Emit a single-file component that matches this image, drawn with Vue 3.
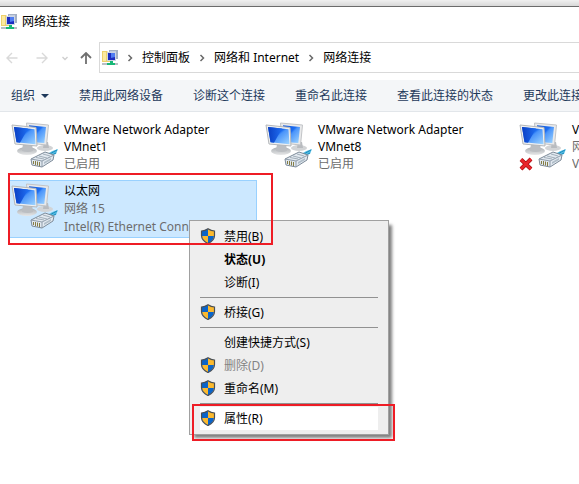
<script setup>
const commands = ['禁用此网络设备', '诊断这个连接', '重命名此连接', '查看此连接的状态', '更改此连接的设置']
const crumbs = ['控制面板', '网络和 Internet', '网络连接']
const adapters = [
  { title: 'VMware Network Adapter VMnet1', lines: ['已启用'] },
  { title: 'VMware Network Adapter VMnet8', lines: ['已启用'] },
  { title: 'VMware', lines: ['网络', 'VMware Virtual'], off: true },
  { title: '以太网', lines: ['网络 15', 'Intel(R) Ethernet Connection'], selected: true },
]
const menu = [
  { label: '禁用(B)', shield: true },
  { label: '状态(U)', bold: true },
  { label: '诊断(I)' },
  { sep: true },
  { label: '桥接(G)', shield: true },
  { sep: true },
  { label: '创建快捷方式(S)' },
  { label: '删除(D)', shield: true, disabled: true },
  { label: '重命名(M)', shield: true },
  { sep: true },
  { label: '属性(R)', shield: true, active: true },
]
</script>

<template>
  <main class="window">
    <svg class="defs" width="0" height="0" aria-hidden="true">
      <defs>
        <linearGradient id="screen" x1="0" y1="0" x2="1" y2="1">
          <stop offset="0" stop-color="#1558d8" />
          <stop offset=".42" stop-color="#1c6cf0" />
          <stop offset=".5" stop-color="#4a94fa" />
          <stop offset="1" stop-color="#a0d6ff" />
        </linearGradient>
        <linearGradient id="shine" x1="0" y1="0" x2="1" y2="0">
          <stop offset="0" stop-color="#0a3fc4" />
          <stop offset="1" stop-color="#1f6df0" />
        </linearGradient>
        <linearGradient id="base" x1="0" y1="0" x2="0" y2="1">
          <stop offset="0" stop-color="#a9adb1" />
          <stop offset="1" stop-color="#e6e7e8" />
        </linearGradient>
        <symbol id="folder" viewBox="0 0 16 16">
          <path d="M0 1h5l1 1h3v10H0z" fill="#ecd06c" />
          <path d="M1 2h3v9H1z" fill="#fbe9a0" />
          <path d="M7 0h9v9H7z" fill="#a4b0c4" />
          <path d="M8 1h6v6H8z" fill="#c3cde0" />
          <path d="M5 2h9v9H5z" fill="#cdd5e4" />
          <path d="M6 3h7v7H6z" fill="#1c2cc0" />
          <path d="M9 3h4v4L9 8z" fill="#4f7cf2" />
          <path d="M8 11h3v2h2v2H5v-2h3z" fill="#17b877" />
          <path d="M0 13h5v2H0zM13 13h3v2h-3z" fill="#b9bec5" />
        </symbol>
        <symbol id="network" viewBox="0 0 48 48">
          <ellipse cx="34" cy="27" rx="8" ry="3" fill="#d2d4d6" />
          <path d="M33 21h4l1 6h-6z" fill="#b8bbbf" />
          <path d="M15.500 2 37.500 4 35.500 24 17 22z" fill="#e9eaeb" stroke="#c2c4c7" />
          <path d="M18 4.200 35 6 33.300 22 19 21z" fill="url(#screen)" />
          <ellipse cx="16" cy="30" rx="10" ry="4" fill="url(#base)" />
          <path d="M12 23h9l1 7q-5 2-11 0z" fill="#bbbec2" />
          <path d="M1 4 25 6.500 26 25 4 23z" fill="#eff0f1" stroke="#b4b7ba" />
          <path d="M3 6 23.500 8.200 24.500 23.300 5.500 21.300z" fill="url(#screen)" />
          <path d="M3 6 17 7.500 9 21.700 5.500 21.300z" fill="url(#shine)" />
          <path d="M36 33q4-3 11-5l-2 5q-3 0-5 3z" fill="#56bde2" />
          <path d="M39 33q3-2 7-4M41 35q1-2 4-3" fill="none" stroke="#1b8abd" />
          <path d="M20 38 34 31 43 34 42 39 31 46 21 44z" fill="#e2e9f0" stroke="#7d8b99" />
          <path d="M20 38 31 40 43 34M31 40v6" fill="none" stroke="#8f9caa" />
          <path d="M25 36.500 33 38M28 35l8 2M32 33l7 2" stroke="#a2afba" />
          <path d="M22 40h1v3h-1zM24 40h1v4h-1zM26 40.500h1v4h-1zM28 41h1v4h-1z" fill="#857d45" />
          <path d="M33 41l7-4v2l-7 4z" fill="#b0bdc8" />
        </symbol>
        <symbol id="shield" viewBox="0 0 16 16">
          <path d="M8 1 14 3v4.500q0 5-6 8-6-3-6-8V3z" fill="#0a64c9" />
          <path d="M8 1 14 3v5H8zM8 8v7.500q-5-2.500-6-7.500z" fill="#fbb92e" />
          <path d="M8 .8Q5 3 1.500 3v4.500q0 5 6.500 8 6.500-3 6.500-8V3Q11 3 8 .8z" fill="none" stroke="#4a4f55" stroke-width="1.200" />
        </symbol>
      </defs>
    </svg>

    <div class="backdrop"></div>
    <header class="title">
      <svg class="small-icon"><use href="#folder" /></svg>
      <h1>网络连接</h1>
    </header>

    <nav class="nav" aria-label="导航">
      <div class="history">
        <button class="arrow" aria-label="后退">
          <svg viewBox="0 0 12 12"><path d="M11.500 6H1M6 1 1 6l5 5" stroke="#d9d9d9" stroke-width="1.400" /></svg>
        </button>
        <button class="arrow forward" aria-label="前进">
          <svg viewBox="0 0 12 12"><path d="M.5 6H11M6 1l5 5-5 5" stroke="#d9d9d9" stroke-width="1.400" /></svg>
        </button>
        <button class="recent" aria-label="最近位置">
          <svg viewBox="0 0 6 6"><path d="M.5 2 3 4.500 5.500 2" stroke="#cfcfcf" stroke-width="1.400" /></svg>
        </button>
        <button class="arrow" aria-label="上移">
          <svg viewBox="0 0 12 12"><path d="M6 12V1M1 6l5-5 5 5" stroke="#6f6f6f" stroke-width="1.800" /></svg>
        </button>
      </div>
      <div class="address">
        <svg class="small-icon"><use href="#folder" /></svg>
        <template v-for="c in crumbs" :key="c">
          <svg class="chevron" viewBox="0 0 6 8"><path d="M1.500 1 4.500 4l-3 3" /></svg>
          <a href="#">{{ c }}</a>
        </template>
      </div>
    </nav>

    <div class="toolbar">
      <button class="organize">组织<span class="caret"></span></button>
      <button v-for="c in commands" :key="c">{{ c }}</button>
    </div>

    <section class="list">
      <article v-for="a in adapters" :key="a.title" class="adapter" :class="{ selected: a.selected }">
        <div class="picture">
          <svg class="net"><use href="#network" /></svg>
          <svg v-if="a.off" class="cross" viewBox="0 0 14 14">
            <path d="M2 2.500 12 12M12 2 2 12" stroke="#a80d12" stroke-width="4" />
            <path d="M2 2.500 12 12M12 2 2 12" stroke="#e9252b" stroke-width="2.500" />
          </svg>
        </div>
        <div class="info">
          <h2>{{ a.title }}</h2>
          <p v-for="l in a.lines" :key="l">{{ l }}</p>
        </div>
      </article>
    </section>

    <div class="menu" role="menu">
      <template v-for="(m, i) in menu" :key="i">
        <hr v-if="m.sep" />
        <button v-else role="menuitem" :disabled="m.disabled" :class="{ bold: m.bold, active: m.active }">
          <span class="slot"><svg v-if="m.shield"><use href="#shield" /></svg></span>{{ m.label }}
        </button>
      </template>
    </div>
    <div class="mark mark-adapter"></div>
    <div class="mark mark-properties"></div>
  </main>
</template>

<style>
body {
  margin: 0;
  background: #fff;
}
</style>

<style scoped>
.window {
  position: relative;
  min-height: 100vh;
  overflow: hidden;
  background: #fff;
  color: #000;
  font: 12px/18px "Noto Sans", "Noto Sans CJK SC", sans-serif;
}
.defs {
  position: absolute;
}
svg {
  display: block;
  flex: none;
}
button {
  margin: 0;
  padding: 0;
  border: 0;
  background: none;
  color: inherit;
  font: inherit;
  white-space: nowrap;
}
h1,
h2,
p {
  margin: 0;
  font: inherit;
}
.backdrop {
  height: 6px;
  border-bottom: 1px solid #6b6b6b;
  background: linear-gradient(#f0f0f0, #d8d8d8);
}
.title {
  display: flex;
  align-items: center;
  gap: 5px;
  height: 30px;
  padding: 0 1px;
}
.small-icon {
  width: 16px;
  height: 16px;
}
.nav {
  display: flex;
  align-items: center;
  padding: 5px 0 7px;
}
.history {
  display: flex;
  align-items: center;
  gap: 12px;
  flex: none;
  padding: 0 7px 0 6px;
}
.arrow svg {
  width: 12px;
  height: 12px;
}
.forward {
  margin-left: 6px;
}
.recent svg {
  width: 6px;
  height: 6px;
}
.recent {
  margin-left: 2px;
}
.arrow path,
.recent path,
.chevron path {
  fill: none;
}
.address {
  display: flex;
  flex: 1;
  align-items: center;
  height: 29px;
  padding-left: 2px;
  border: 1px solid #d9d9d9;
  border-right: 0;
}
.chevron {
  width: 6px;
  height: 8px;
  margin: 0 9px;
}
.chevron path {
  stroke: #6a6a6a;
  stroke-width: 1.5;
}
.address a {
  color: #000;
  text-decoration: none;
  white-space: nowrap;
}
.toolbar {
  display: flex;
  align-items: center;
  gap: 30px;
  height: 31px;
  padding-left: 11px;
  border-bottom: 1px solid #e2e6ea;
  background: #f4f6f8;
  color: #1e395b;
}
.organize {
  display: flex;
  align-items: center;
  gap: 6px;
}
.caret {
  border: 4px solid transparent;
  border-top-color: #1e395b;
  border-bottom: 0;
}
.list {
  display: grid;
  grid-template-columns: repeat(3, 254px);
  row-gap: 3px;
  padding: 7px 0 0 8px;
}
.adapter {
  display: flex;
  gap: 5px;
  box-sizing: border-box;
  width: 249px;
  height: 58px;
  padding: 1px 2px;
  border: 1px solid transparent;
  line-height: 17px;
}
.selected {
  border-color: #99d1ff;
  background: #cce8ff;
  line-height: 18px;
}
.picture {
  position: relative;
  flex: none;
}
.net {
  width: 48px;
  height: 48px;
}
.cross {
  position: absolute;
  left: 0;
  bottom: 4px;
  width: 14px;
  height: 14px;
}
.info {
  min-width: 0;
  padding-right: 24px;
}
.info p {
  overflow: hidden;
  color: #6d6d6d;
  white-space: nowrap;
}
.menu {
  position: absolute;
  top: 220px;
  left: 189px;
  box-sizing: border-box;
  width: 200px;
  padding: 4px 10px;
  border: 1px solid #a0a0a0;
  background: #eee;
  box-shadow: 4px 4px 3px -1px rgba(0, 0, 0, 0.5);
}
.menu button {
  display: flex;
  align-items: center;
  width: 100%;
  height: 23px;
}
.menu button:disabled {
  color: #838383;
}
.menu .bold {
  font-weight: 700;
}
.menu .active {
  background: #fff;
}
.menu hr {
  height: 1px;
  margin: 3px 0;
  border: 0;
  background: #919191;
}
.slot {
  flex: none;
  width: 24px;
}
.slot svg {
  width: 16px;
  height: 16px;
  margin-bottom: 2px;
}
.mark {
  position: absolute;
  box-sizing: border-box;
  border: 2px solid #ee1c25;
  pointer-events: none;
}
.mark-adapter {
  top: 173px;
  left: 8px;
  width: 265px;
  height: 72px;
}
.mark-properties {
  top: 404px;
  left: 192px;
  width: 203px;
  height: 37px;
}
</style>
